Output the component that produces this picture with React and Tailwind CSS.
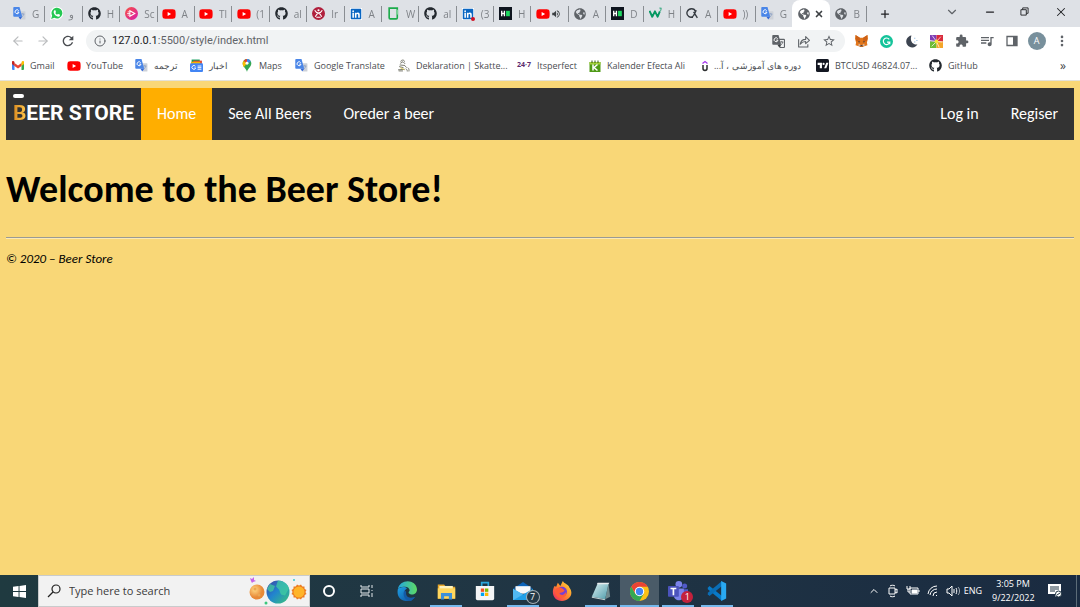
import React from "react";
import { FaGithub, FaYoutube, FaPhoneAlt, FaLinkedin, FaGlobeAmericas } from "react-icons/fa";
import { MdQueueMusic, MdVolumeUp, MdRefresh, MdStarBorder, MdExtension } from "react-icons/md";
import { ArrowLeft, ArrowRight, ChevronDown, ChevronUp, X, Plus, Minus, Info, MoreVertical } from "lucide-react";

/* ---------- Favicons ---------- */

function Translate({ grey }) {
  return (
    <svg viewBox="0 0 24 24" className="size-[13px]" aria-hidden="true">
      <path d="M11 8h11a1 1 0 0 1 1 1v13a1 1 0 0 1-1 1h-7z" fill={grey ? "#f1f3f4" : "#cdd1d8"} stroke={grey ? "#5f6368" : "none"} strokeWidth="2" />
      <path d="M15 13h6M18 11v2M20 13c-1 3-2 4-4 6" stroke={grey ? "#5f6368" : "#8ea3c6"} strokeWidth="1.500" fill="none" />
      <path d="M2 0h10l5 18H2a1.500 1.500 0 0 1-1.500-1.500v-15A1.500 1.500 0 0 1 2 0z" fill={grey ? "#5f6368" : "#4a86e8"} />
      <path d="M10 18h7l-3.500 5z" fill={grey ? "#3c4043" : "#3367d6"} />
      <path d="M10.500 6.800A3.600 3.600 0 1 0 11 9.500H7.800" stroke="#fff" strokeWidth="1.800" fill="none" />
    </svg>
  );
}
const Github = () => <FaGithub className="size-[13px] text-[#24292f]" />;
const Youtube = () => (
  <span className="relative flex h-[13px] w-[13px] items-center justify-center">
    <span className="absolute h-1.5 w-1.5 bg-white" />
    <FaYoutube className="relative size-[14px] shrink-0 text-[#ff0000]" />
  </span>
);
const Globe = () => <FaGlobeAmericas className="size-3 text-[#5f6368]" />;
const Whatsapp = () => (
  <svg viewBox="0 0 24 24" className="size-[13px]" aria-hidden="true">
    <path d="M0 24l2-7a12 12 0 1 1 5 5z" fill="#fff" />
    <path d="M2 22l2-6a10 10 0 1 1 4 4z" fill="#25c853" />
    <path d="M8 6c-4 5 3 12 8 12 2 0 3-2 2-4l-3-1-2 1c-1 0-3-2-3-3l1-2-1-3z" fill="#fff" />
  </svg>
);
function Linkedin({ dot }) {
  return (
    <span className="relative flex size-3 bg-white">
      <FaLinkedin className="size-3 text-[#0a66c2]" />
      {dot && <span className="absolute -right-px -bottom-px size-1 rounded-full bg-[#d11124]" />}
    </span>
  );
}
const Play = () => (
  <svg viewBox="0 0 24 24" className="size-[13px]" aria-hidden="true">
    <defs>
      <linearGradient id="play" x1="0" y1="0" x2="1" y2="1">
        <stop offset="0" stopColor="#f7523f" />
        <stop offset="1" stopColor="#d81bb0" />
      </linearGradient>
    </defs>
    <circle cx="12" cy="12" r="12" fill="url(#play)" />
    <path d="M9 7l9 5-9 5z" fill="none" stroke="#fff" strokeWidth="2" />
    <path d="M5 9h3M4 12h5M5 15h3" stroke="#fff" strokeWidth="1.500" />
  </svg>
);
const Crimson = () => (
  <svg viewBox="0 0 24 24" className="size-[13px]" aria-hidden="true">
    <circle cx="12" cy="12" r="12" fill="#b01f3c" />
    <circle cx="12" cy="6" r="2" fill="#fff" />
    <path d="M5 6c2 4 5 5 7 5s5-1 7-5M6 18c2-4 4-6 6-7 2 1 4 3 6 7M8 19h8" stroke="#fff" strokeWidth="2" fill="none" />
  </svg>
);
const GreenFrame = () => (
  <svg viewBox="0 0 24 24" className="size-[13px]" aria-hidden="true">
    <path d="M9 22H6a2 2 0 0 1-2-2V2h15v18a2 2 0 0 1-2 2H9" fill="none" stroke="#1cab4b" strokeWidth="3" />
    <path d="M19 5v9" stroke="#7bd296" strokeWidth="3" />
  </svg>
);
const Hacker = () => (
  <svg viewBox="0 0 24 24" className="size-[13px]" aria-hidden="true">
    <path d="M0 0h24v24H0z" fill="#0e141e" />
    <path d="M5 7v10M10 7v10M5 12h5" stroke="#fff" strokeWidth="2.500" />
    <path d="M13 7h7v10h-7z" fill="#1ed760" />
  </svg>
);
const Waves = () => (
  <svg viewBox="0 0 24 24" className="size-[13px]" aria-hidden="true">
    <path d="M1 7l5 11 5-10 5 10 4-10" fill="none" stroke="#059862" strokeWidth="3.500" strokeLinejoin="round" />
    <path d="M19 2h4l-2 2c3 0 2 3-1 3" fill="none" stroke="#059862" strokeWidth="1.300" />
  </svg>
);
const Loop = () => (
  <svg viewBox="0 0 24 24" className="size-[13px]" aria-hidden="true">
    <path d="M17 8c-1-6-12-7-15 1-2 8 7 13 12 7l5-10M14 9l7 11M8 19h5" fill="none" stroke="#353a40" strokeWidth="2.500" />
  </svg>
);
const Gmail = () => (
  <svg viewBox="0 0 24 18" className="w-3" aria-hidden="true">
    <path d="M0 2v14a2 2 0 0 0 2 2h3V5z" fill="#4285f4" />
    <path d="M24 2v14a2 2 0 0 1-2 2h-3V5z" fill="#34a853" />
    <path d="M5 4l7 5 7-5v6l-7 5-7-5z" fill="#ea4335" />
    <path d="M0 2c0-2 2-2.500 3.500-1.500L5 2v8L0 6z" fill="#c5221f" />
    <path d="M24 2c0-2-2-2.500-3.500-1.500L19 2v8l5-4z" fill="#fbbc04" />
  </svg>
);
const News = () => (
  <svg viewBox="0 0 24 24" className="size-[13px]" aria-hidden="true">
    <path d="M3 1h15v8H3z" fill="#0f9d58" />
    <path d="M6 3h16v8H6z" fill="#db4437" />
    <path d="M2 5h17v8H2z" fill="#f4b400" />
    <rect y="8" width="24" height="16" rx="2" fill="#4285f4" />
    <path d="M10 13.500a3.500 3.500 0 1 0 .5 3H8M14 13h7M14 16h7M14 19h7" stroke="#fff" strokeWidth="1.700" fill="none" />
  </svg>
);
const Pin = () => (
  <svg viewBox="0 0 18 24" className="h-[13px] w-3" aria-hidden="true">
    <path d="M9 24C8 18 1 15 1 8a8 8 0 0 1 16 0c0 7-7 10-8 16z" fill="#34a853" />
    <path d="M1 8a8 8 0 0 1 2-5l6 5-6 7C2 13 1 11 1 8z" fill="#fbbc04" />
    <path d="M3 3a8 8 0 0 1 6-3l0 8z" fill="#ea4335" />
    <path d="M9 0a8 8 0 0 1 7 4L9 9z" fill="#4285f4" />
    <circle cx="9" cy="8" r="2.700" fill="#fff" />
  </svg>
);
const Crown = () => (
  <svg viewBox="0 0 24 24" className="size-[13px]" aria-hidden="true">
    <path d="M7 5c0-4 7-4 7 0M6 8l5-3 4 4M5 11l10 1M4 14l8 2M2 20l12-1M3 22h8M15 13l3 3M20 16c3 2 2 6 2 7M16 18c3 1 3 4 3 5" stroke="#77786c" strokeWidth="1.800" fill="none" />
    <path d="M6 16l8 4" stroke="#d4c13e" strokeWidth="1.500" />
  </svg>
);
const Kalender = () => (
  <svg viewBox="0 0 24 24" className="size-3" aria-hidden="true">
    <path d="M1 4h22v20H1z" fill="#4f9a17" />
    <path d="M1 4h22v5H1z" fill="#a2cf3a" />
    <path d="M6 1v5M12 1v5M18 1v5" stroke="#31590c" strokeWidth="2" />
    <path d="M8 9v12M17 9l-7 6 7 6" stroke="#fff" strokeWidth="3" fill="none" />
  </svg>
);
const Udemy = () => (
  <svg viewBox="0 0 12 24" className="h-3 w-1.5" aria-hidden="true">
    <path d="M1 7l5-4 5 4" fill="none" stroke="#a435f0" strokeWidth="2.500" />
    <path d="M2 10v7c0 5 8 5 8 0v-7" fill="none" stroke="#2d2f31" strokeWidth="3" />
  </svg>
);
const Trading = () => (
  <svg viewBox="0 0 24 24" className="size-[13px]" aria-hidden="true">
    <rect width="24" height="24" rx="3" fill="#131722" />
    <path d="M3 7h8v10H7v-6H3zM15 17l4-10h4l-4 10z" fill="#fff" />
    <circle cx="14" cy="9" r="2" fill="#fff" />
  </svg>
);

/* ---------- Browser tabs ---------- */

const tabs = [
  [Translate, "G"], [Whatsapp, "و"], [Github, "H"], [Play, "Sc"], [Youtube, "A"], [Youtube, "Tl"],
  [Youtube, "(1"], [Github, "al"], [Crimson, "Ir"], [Linkedin, "A"], [GreenFrame, "W"], [Github, "al"],
  [Linkedin, "(3", "dot"], [Hacker, "H"], [Youtube, "", "sound"], [Globe, "A"], [Hacker, "D"], [Waves, "H"],
  [Loop, "A"], [Youtube, "))"], [Translate, "G"], [Globe, "", "active"], [Globe, "B"],
];

function Tab({ item, divided }) {
  const [Icon, label, state] = item;
  if (state === "active") {
    return (
      <div className="flex h-full min-w-0 flex-1 items-center gap-1 rounded-t-lg bg-white pl-1.5">
        <Icon />
        <button aria-label="Close tab"><X className="size-2.5 text-[#3c4043]" strokeWidth={4} /></button>
      </div>
    );
  }
  return (
    <button className={`flex h-4 min-w-0 flex-1 items-center pl-[5px] text-left text-[#5f6368] ${divided ? "border-r border-[#898d92]" : ""}`}>
      <span className="flex w-[13px] shrink-0"><Icon dot={state === "dot"} /></span>
      {state === "sound" ? (
        <MdVolumeUp className="ml-0.5 size-2.5 shrink-0 text-[#3c4043]" />
      ) : (
        <span className="ml-1.5 text-[10px] leading-4 whitespace-nowrap opacity-75">{label}</span>
      )}
    </button>
  );
}

function TabStrip() {
  return (
    <div className="flex h-[27px] items-center bg-[#dee1e6] pl-2">
      <div className="flex h-full w-[859px] min-w-0 items-center">
        {tabs.map((item, i) => (
          <Tab key={i} item={item} divided={i !== 20} />
        ))}
      </div>
      <button aria-label="New tab" className="ml-3"><Plus className="size-3 text-[#202124]" strokeWidth={2.5} /></button>
      <div className="ml-auto flex h-full w-[147px] shrink-0 items-center justify-around pb-1 text-[#202124]">
        <button aria-label="Search tabs"><ChevronDown className="size-3.5 text-[#5f6368]" strokeWidth={2} /></button>
        <button aria-label="Minimize"><Minus className="size-3" strokeWidth={2.5} /></button>
        <button aria-label="Restore">
          <svg viewBox="0 0 10 10" className="size-[9px]" fill="none" stroke="currentColor"><path d="M1 3h6v6H1zM3 3V1h6v6H7" /></svg>
        </button>
        <button aria-label="Close"><X className="size-3.5" strokeWidth={1.8} /></button>
      </div>
    </div>
  );
}

/* ---------- Toolbar ---------- */

const Share = () => (
  <svg viewBox="0 0 24 24" className="size-[13px]" fill="none" stroke="#5f6368" strokeWidth="2">
    <path d="M3 8v14h17v-5M6 17c1-6 5-9 10-9V3l7 7-7 6v-4c-4 0-7 1-10 5z" strokeLinejoin="round" />
  </svg>
);
const Fox = () => (
  <svg viewBox="0 0 24 22" className="w-[13px]">
    <path d="M1 0l8 5h6l8-5 1 7-2 7 1 5-6 2-3 1h-4l-3-1-6-2 1-5-2-7z" fill="#e2761b" />
    <path d="M1 0l8 5 0 7-7-1zM23 0l-8 5v7l7-1z" fill="#cd6116" />
    <path d="M6 11l4 2-3 1zM18 11l-4 2 3 1zM10 19h4l1 2H9z" fill="#233447" />
    <path d="M7 16l3 2v2l-4 0zM17 16l-3 2v2l4 0z" fill="#d7c1b3" />
  </svg>
);
const Grammar = () => (
  <svg viewBox="0 0 24 24" className="size-[13px]">
    <circle cx="12" cy="12" r="12" fill="#15c39a" />
    <path d="M17 8a6 6 0 1 0 1 5h-5M18 12v5" fill="none" stroke="#fff" strokeWidth="2.200" />
  </svg>
);
const Night = () => (
  <svg viewBox="0 0 24 24" className="size-[13px]">
    <path d="M12 1a11 11 0 1 0 11 16C15 19 8 11 12 1z" fill="#3c4450" />
    <path d="M17 5h2v2h-2zM21 9h2v2h-2zM17 12h2v2h-2z" fill="#8cb7df" />
  </svg>
);
const Pinwheel = () => (
  <svg viewBox="0 0 24 24" className="size-[13px]">
    <path d="M0 0h12v12H0z" fill="#7e3db5" />
    <path d="M12 0h12v12H12z" fill="#d92b3c" />
    <path d="M0 12h12v12H0z" fill="#6dbb37" />
    <path d="M12 12h12v12H12z" fill="#f4a62a" />
    <path d="M12 12L4 1M12 12L20 3M12 12l11 1M12 12L3 21M12 12l5 11M12 12L0 10" stroke="#fff" strokeWidth="1.300" />
    <circle cx="12" cy="12" r="3.500" fill="#f5e13b" />
  </svg>
);
const Panel = () => (
  <svg viewBox="0 0 24 24" className="size-3">
    <path d="M2 3h20v18H2z" fill="none" stroke="#5f6368" strokeWidth="2.600" />
    <path d="M14 3h8v18h-8z" fill="#5f6368" />
  </svg>
);

function ToolButton({ label, children }) {
  return <button aria-label={label} className="flex h-[22px] w-[25px] items-center justify-center text-[#5f6368]">{children}</button>;
}

function Toolbar() {
  return (
    <div className="flex h-7 items-center bg-white pr-1.5 pl-[5px]">
      <ToolButton label="Back"><ArrowLeft className="size-3.5 text-[#babcbe]" /></ToolButton>
      <ToolButton label="Forward"><ArrowRight className="size-3.5 text-[#babcbe]" /></ToolButton>
      <ToolButton label="Reload"><MdRefresh className="size-4 text-[#4a4d51]" /></ToolButton>
      <div className="mr-1 ml-[6px] flex h-[22px] min-w-0 flex-1 items-center rounded-full bg-[#f1f3f4] pr-1 pl-2">
        <Info className="size-3 text-[#5f6368]" />
        <div className="relative ml-1.5 h-4 min-w-0 flex-1 font-['Roboto','Open_Sans',sans-serif] text-[11px] leading-4">
          <span aria-hidden="true" className="pointer-events-none absolute inset-0 text-[#5f6368]"><span className="text-[#202124]">127.0.0.1</span>:5500/style/index.html</span>
          <input aria-label="Address" defaultValue="127.0.0.1:5500/style/index.html" className="h-full w-full bg-transparent text-transparent outline-none" />
        </div>
        <ToolButton label="Translate"><Translate grey /></ToolButton>
        <ToolButton label="Share"><Share /></ToolButton>
        <ToolButton label="Bookmark"><MdStarBorder className="size-3.5" /></ToolButton>
      </div>
      <ToolButton label="Wallet"><Fox /></ToolButton>
      <ToolButton label="Grammar"><Grammar /></ToolButton>
      <ToolButton label="Dark mode"><Night /></ToolButton>
      <ToolButton label="Colors"><Pinwheel /></ToolButton>
      <ToolButton label="Extensions"><MdExtension className="size-3.5" /></ToolButton>
      <ToolButton label="Media"><MdQueueMusic className="size-4" /></ToolButton>
      <ToolButton label="Side panel"><Panel /></ToolButton>
      <ToolButton label="Profile">
        <span className="flex size-[18px] items-center justify-center rounded-full bg-[#78909c] text-[9px] text-white">A</span>
      </ToolButton>
      <ToolButton label="Menu"><MoreVertical className="size-3.5" strokeWidth={2.5} /></ToolButton>
    </div>
  );
}

/* ---------- Bookmarks ---------- */

const bookmarks = [
  [Gmail, "Gmail"], [Youtube, "YouTube"], [Translate, "ترجمه"], [News, "اخبار"], [Pin, "Maps"],
  [Translate, "Google Translate"], [Crown, "Deklaration | Skatte..."],
  [() => <span className="text-[7px] font-bold text-[#5b2a6e]">24·7</span>, "Itsperfect"],
  [Kalender, "Kalender Efecta Ali"], [Udemy, "دوره های آموزشی ، آ..."], [Trading, "BTCUSD 46824.07..."], [Github, "GitHub"],
];

function Bookmarks() {
  return (
    <div className="flex h-[26px] items-center border-b border-[#e4e2da] bg-white pr-3.5 pb-1 pl-3">
      <div className="grid grid-cols-[55px_68px_55px_51px_54px_102px_120px_72px_113px_114px_113px_60px]">
        {bookmarks.map(([Icon, label], i) => (
          <a key={i} href="#bookmark" className="flex h-5 items-center gap-1.5 whitespace-nowrap text-[#4a4d51]">
            <Icon />
            <span dir="auto" className="text-[9px]">{label}</span>
          </a>
        ))}
      </div>
      <button aria-label="More bookmarks" className="ml-auto text-xs leading-4 text-[#3c4043]">»</button>
    </div>
  );
}

/* ---------- Store page ---------- */

function NavLink({ active, children }) {
  return (
    <a href="#page" className={`flex items-center px-4 text-white ${active ? "bg-[#ffae00]" : ""}`}>{children}</a>
  );
}

function Store() {
  return (
    <main className="flex-1 bg-[#f9d777] px-1.5 pt-[7px] font-['Carlito','Lato',sans-serif]">
      <nav className="flex h-[52px] bg-[#333333] text-[16px]">
        <a href="#home" aria-label="Beer Store" className="flex w-[135px] items-center justify-center font-['Roboto',sans-serif] text-[21px] font-bold whitespace-nowrap text-white">
          <span className="relative bg-linear-to-r from-[#d98a1f] to-[#ffc64a] bg-clip-text text-transparent">
            B
            <span className="absolute -top-1 left-0 h-1 w-[11px] rounded-xs bg-white" />
          </span>
          <span>EER STORE</span>
        </a>
        <NavLink active>Home</NavLink>
        <NavLink>See All Beers</NavLink>
        <NavLink>Oreder a beer</NavLink>
        <div className="ml-auto flex">
          <NavLink>Log in</NavLink>
          <NavLink>Regiser</NavLink>
        </div>
      </nav>
      <h1 className="mt-6 text-[38px] leading-[50px] font-bold text-black">Welcome to the Beer Store!</h1>
      <hr className="mt-[23px] border-t border-b border-t-[#9a9a94] border-b-[#fbe9b5]" />
      <footer className="mt-3 text-[13px] leading-4 text-black italic">© 2020 – Beer Store</footer>
    </main>
  );
}

/* ---------- Taskbar ---------- */

const Planets = () => (
  <svg viewBox="0 0 60 29" className="h-[29px] w-[60px] shrink-0">
    <defs>
      <linearGradient id="earth" x1="0" y1="0" x2="1" y2="1">
        <stop offset="0" stopColor="#41409c" /><stop offset=".45" stopColor="#2184cf" /><stop offset="1" stopColor="#3bc778" />
      </linearGradient>
      <radialGradient id="moon" cx=".35" cy=".35"><stop offset="0" stopColor="#ffd884" /><stop offset="1" stopColor="#e88938" /></radialGradient>
    </defs>
    <circle cx="8" cy="15" r="7.500" fill="url(#moon)" />
    <circle cx="6" cy="12" r="1.500" fill="#e9a653" /><circle cx="10" cy="18" r="1.500" fill="#e9a653" />
    <circle cx="29" cy="15" r="11.500" fill="url(#earth)" />
    <path d="M29 3.500c6 0 10 4 11 8l-4 7-4-1-2-5-3-3zM21 7l5 2-2 5-3 1-3-3z" fill="#42d2a0" opacity=".7" />
    <g transform="translate(50 15)" fill="#ec7c22">
      <path d="M-5.500-5.500h11v11h-11z" /><path d="M-5.500-5.500h11v11h-11z" transform="rotate(30)" /><path d="M-5.500-5.500h11v11h-11z" transform="rotate(60)" />
      <circle r="5.500" fill="#ffb429" />
    </g>
    <path d="M1 1l2 1 2-2 0 3 2 1-3 1-1 1-1-2z" fill="#c764e8" /><path d="M44 2h2v2h-2z" fill="#66d2d6" />
    <circle cx="17" cy="26" r="1.500" fill="#3ac77c" />
  </svg>
);
const Edge = () => (
  <svg viewBox="0 0 24 24" className="size-5">
    <defs>
      <linearGradient id="edge-top" x1="0" x2="1"><stop offset="0" stopColor="#22a6e0" /><stop offset="1" stopColor="#5edb63" /></linearGradient>
      <linearGradient id="edge-low" x1="0" y1="0" x2="1" y2="1"><stop offset="0" stopColor="#1fa0e4" /><stop offset="1" stopColor="#0c4c9b" /></linearGradient>
    </defs>
    <path d="M1 10C3-3 23-3 24 10c0 5-4 7-8 6-2-1-3-2-1-4 1-3-3-6-7-5-3 0-6 1-7 3z" fill="url(#edge-top)" />
    <path d="M1 10c2-3 9-4 11-1-5 2-5 13 7 11 2 0 3-1 3-1C16 28-2 25 1 10z" fill="url(#edge-low)" />
    <path d="M9 11c-3 5 0 13 8 13l5-5c-6 3-12 1-11-6z" fill="#145aa5" />
  </svg>
);
const Folder = () => (
  <svg viewBox="0 0 24 24" className="size-[19px]">
    <path d="M1 3h8l2 3h12v15H1z" fill="#e8a628" /><path d="M3 5h17v5H3z" fill="#fff3bd" /><path d="M1 8h22v13H1z" fill="#ffd75e" />
    <path d="M5 22v-8h14v8h-4v-4H9v4z" fill="#3d90da" />
  </svg>
);
const Shop = () => (
  <svg viewBox="0 0 24 24" className="size-5">
    <path d="M8 7V2h8v5" fill="none" stroke="#29a6dd" strokeWidth="2" />
    <path d="M1 6h22v15a2 2 0 0 1-2 2H3a2 2 0 0 1-2-2z" fill="#f4f5f6" />
    <path d="M7 9h4v4H7z" fill="#f25022" /><path d="M12 9h4v4h-4z" fill="#7fba00" />
    <path d="M7 14h4v4H7z" fill="#00a4ef" /><path d="M12 14h4v4h-4z" fill="#ffb900" />
  </svg>
);
const Mail = () => (
  <svg viewBox="0 0 24 22" className="w-5">
    <path d="M0 8l12-8 12 8z" fill="#0b63b8" /><path d="M3 5h18v9H3z" fill="#f7f9fa" />
    <path d="M0 8l12 7 12-7v14H0z" fill="#20a0e8" /><path d="M0 8l12 7L0 22z" fill="#51b9f2" />
  </svg>
);
const Firefox = () => (
  <svg viewBox="0 0 24 24" className="size-5">
    <defs>
      <linearGradient id="flame" x1="1" y1="0" x2="0" y2="1"><stop offset="0" stopColor="#ffe33b" /><stop offset=".5" stopColor="#ff862d" /><stop offset="1" stopColor="#ee1d67" /></linearGradient>
    </defs>
    <path d="M3 6l2 1 2-5 3 4 3-6c1 3 7 4 8 8 6 8-1 16-9 16C3 24-2 15 3 6z" fill="url(#flame)" />
    <circle cx="12" cy="13" r="6" fill="#7641d4" />
    <path d="M5 9c5-3 8 1 10 2-2 4-5 2-6 4 2 3 6 2 8-2 1 7-6 9-10 6-3-2-4-6-2-10z" fill="#ff5b38" />
  </svg>
);
const Note = () => (
  <svg viewBox="0 0 24 24" className="size-5">
    <defs>
      <linearGradient id="note" x1="0" y1="0" x2="1" y2="1"><stop offset="0" stopColor="#d8eef0" /><stop offset="1" stopColor="#4f9cab" /></linearGradient>
    </defs>
    <path d="M21 3l2 16-6 3z" fill="#718a8e" /><path d="M8 3l13 0-4 19-16-3z" fill="url(#note)" />
    <path d="M8 2h14l-1 2H7z" fill="#e8eced" /><path d="M1 19l16 3v1L1 20z" fill="#c6d3d5" />
  </svg>
);
const Chrome = () => (
  <svg viewBox="0 0 24 24" className="size-[19px]">
    <circle cx="12" cy="12" r="12" fill="#fbc116" />
    <path d="M1.600 6A12 12 0 0 1 22.400 6H12L6.800 15z" fill="#ea4335" />
    <path d="M1.600 6A12 12 0 0 0 12 24l5.200-9H6.800z" fill="#34a853" />
    <circle cx="12" cy="12" r="6" fill="#fff" /><circle cx="12" cy="12" r="4.600" fill="#4285f4" />
  </svg>
);
const Teams = () => (
  <svg viewBox="0 0 24 24" className="size-5">
    <circle cx="13" cy="4" r="4" fill="#7b83eb" /><circle cx="20" cy="6" r="3" fill="#5059c9" />
    <path d="M14 10h10v7c0 4-6 5-8 2z" fill="#5059c9" /><path d="M7 9h12v8c0 8-12 8-12 0z" fill="#7b83eb" />
    <rect y="6" width="13" height="13" rx="1" fill="#4b53bc" /><path d="M3 9h7M6.500 9v8" stroke="#fff" strokeWidth="2" />
  </svg>
);
const Code = () => (
  <svg viewBox="0 0 24 24" className="size-5">
    <path d="M1 8l2-2 15 12v6L1 10z" fill="#0879c7" />
    <path d="M1 16l2 2L18 6V0L1 14z" fill="#0a6db5" />
    <path d="M17 0l6 3v18l-6 3z" fill="#29a9f2" />
  </svg>
);

const apps = [
  { name: "Edge", Icon: Edge },
  { name: "File Explorer", Icon: Folder, open: true },
  { name: "Store", Icon: Shop },
  { name: "Mail", Icon: Mail, open: true, badge: "7", badgeStyle: "bg-[#253946] ring-1 ring-[#a5adb2]" },
  { name: "Firefox", Icon: Firefox },
  { name: "Notepad", Icon: Note, open: true },
  { name: "Chrome", Icon: Chrome, open: true, current: true },
  { name: "Teams", Icon: Teams, open: true, badge: "1", badgeStyle: "bg-[#c4213c]" },
  { name: "Code", Icon: Code, open: true },
];

function AppButton({ app }) {
  const { name, Icon, open, current, badge, badgeStyle } = app;
  return (
    <button aria-label={name} className={`relative flex h-full flex-1 items-center justify-center ${current ? "bg-[#4a5b68]" : ""}`}>
      <Icon />
      {badge && <span className={`absolute right-1 bottom-1 flex size-3 items-center justify-center rounded-full text-[9px] leading-3 text-white ${badgeStyle}`}>{badge}</span>}
      {open && <span className={`absolute bottom-0 h-0.5 bg-[#76b9ed] ${current ? "w-full" : "w-8"}`} />}
    </button>
  );
}

function Tray() {
  return (
    <div className="ml-auto flex h-full items-center text-[9px] text-white">
      <div className="flex items-center gap-[7px]">
        <ChevronUp className="size-3" />
        <svg viewBox="0 0 12 14" className="h-3.5 w-3" fill="none" stroke="currentColor"><path d="M2 4h6v6H2zM8 6l2-1v4L8 8M3 2c1-1 4-1 5 0M3 12c1 1 4 1 5 0" /></svg>
        <svg viewBox="0 0 14 12" className="h-3 w-3.5" fill="none" stroke="currentColor"><path d="M4 3h8v6H4zM13 5v2M1 1v3h3V1M2 4v3h2" /><path d="M6 5h5v3H6z" fill="currentColor" /></svg>
        <svg viewBox="0 0 12 12" className="size-3" fill="none" stroke="currentColor"><path d="M1 9A9 9 0 0 1 10 1M3 10a7 7 0 0 1 7-6M6 11a4 4 0 0 1 4-4M9 11l1-1" /></svg>
        <svg viewBox="0 0 14 12" className="h-3 w-3.5" fill="none" stroke="currentColor"><path d="M1 4h2l3-3v10L3 8H1zM8 4v4M10 3c1 2 1 4 0 6" /><path d="M12 2c2 2 2 6 0 8" opacity=".6" /></svg>
      </div>
      <span className="ml-1">ENG</span>
      <time className="ml-2.5 w-[42px] text-center leading-[14px] whitespace-nowrap">3:05 PM<br />9/22/2022</time>
      <button aria-label="Notifications" className="mr-3.5 ml-3.5">
        <svg viewBox="0 0 14 14" className="size-3.5"><path d="M0 0h13v10h-4l-2 3v-3H0z" fill="#fff" /><path d="M2 3h9M2 5h9M2 7h5" stroke="#203544" /><circle cx="10.500" cy="10" r="3" fill="#fff" stroke="#203544" /><path d="M9 11l3-2" stroke="#203544" /></svg>
      </button>
      <span className="mr-[3px] h-full w-px bg-[#5c6c78]" />
    </div>
  );
}

function Taskbar() {
  return (
    <div className="flex h-8 items-center bg-linear-to-r from-[#1f3a40] via-[#203544] to-[#1a2b41]">
      <button aria-label="Start" className="flex h-full w-[38px] items-center justify-center">
        <svg viewBox="0 0 14 14" className="size-[13px]" fill="#fff"><path d="M0 2l6-1v5.500H0zM7 1l7-1v6.500H7zM0 7.500h6V13l-6-1zM7 7.500h7V14l-7-1z" /></svg>
      </button>
      <label className="flex h-8 w-[272px] items-center border border-[#c9cbcc] bg-[#f2f2f2] pl-2">
        <svg viewBox="0 0 14 14" className="size-3.5 shrink-0" fill="none" stroke="#222" strokeWidth="1.200"><circle cx="9" cy="5" r="4" /><path d="M6 8l-5 5" /></svg>
        <input aria-label="Search" placeholder="Type here to search" className="ml-2 min-w-0 flex-1 bg-transparent text-[11px] outline-none placeholder:text-[#3b3b3b]" />
        <Planets />
      </label>
      <button aria-label="Cortana" className="flex w-[38px] justify-center"><span className="size-3 rounded-full border-2 border-white" /></button>
      <button aria-label="Task view" className="mr-0.5 flex w-[38px] justify-center">
        <svg viewBox="0 0 14 12" className="h-3 w-3.5" fill="none" stroke="#e5eaec"><path d="M1 0v2h8V0M1 4h8v4H1zM1 12v-2h8v2M12 0v3M12 5v1M12 8v4" /></svg>
      </button>
      <div className="flex h-full w-[348px]">
        {apps.map((app) => <AppButton key={app.name} app={app} />)}
      </div>
      <Tray />
    </div>
  );
}

export default function App() {
  return (
    <div className="flex min-h-screen flex-col overflow-hidden font-['Open_Sans','Noto_Sans',sans-serif]">
      <TabStrip />
      <Toolbar />
      <Bookmarks />
      <Store />
      <Taskbar />
    </div>
  );
}
